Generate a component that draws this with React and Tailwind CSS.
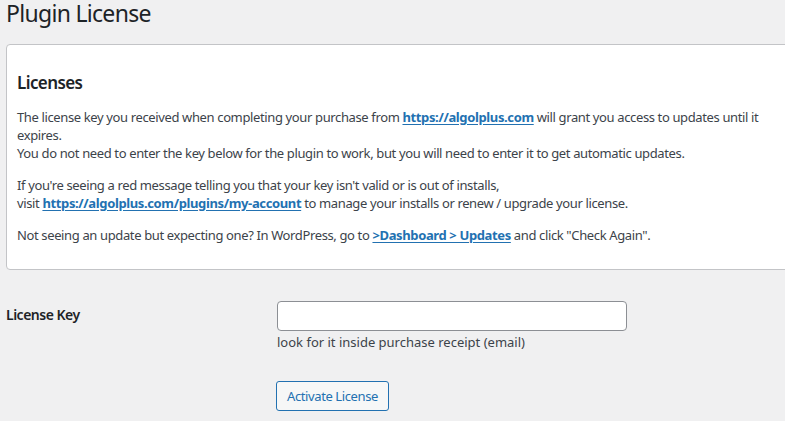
import React from "react";

const font = { fontFamily: '"Noto Sans", "Open Sans", sans-serif' };

function A({ children }) {
  return (
    <a href="#" className="font-bold text-[#2271b1] underline underline-offset-2">
      {children}
    </a>
  );
}

export default function App() {
  return (
    <div className="w-[785px] h-[421px] overflow-hidden bg-[#f0f0f1] text-[#3c434a]" style={font}>
      <div className="pl-[6px] pt-[1px]">
        <h1 className="text-[23px] leading-[25px] tracking-[-0.7px] text-[#1d2327] font-normal whitespace-nowrap">Plugin License</h1>
        <div className="mt-[18px] w-[820px] h-[226px] bg-white border border-[#c3c4c7] rounded-[4px] px-[10px] pt-[26px]">
          <h2 className="text-[17px] leading-[24px] tracking-[-0.6px] font-semibold text-[#1d2327]">Licenses</h2>
          <div className="mt-[13px] text-[13px] leading-[18px] tracking-[-0.37px] whitespace-nowrap">
            <p>
              The license key you received when completing your purchase from <A>https://algolplus.com</A> will grant you access to updates until it
              <br />
              expires.
              <br />
              You do not need to enter the key below for the plugin to work, but you will need to enter it to get automatic updates.
            </p>
            <p className="mt-[14px]">
              If you're seeing a red message telling you that your key isn't valid or is out of installs,
              <br />
              visit <A>https://algolplus.com/plugins/my-account</A> to manage your installs or renew / upgrade your license.
            </p>
            <p className="mt-[14px]">
              Not seeing an update but expecting one? In WordPress, go to <A>&gt;Dashboard &gt; Updates</A> and click "Check Again".
            </p>
          </div>
        </div>
        <div className="mt-[31px] flex">
          <div className="w-[270px] pt-[4px] text-[14px] leading-[20px] tracking-[-0.5px] font-semibold text-[#1d2327]">License Key</div>
          <div className="pl-[1px]">
            <input type="text" className="block w-[350px] h-[30px] bg-white border border-[#8c8f94] rounded-[4px] px-2 text-[14px]" />
            <p className="mt-[2px] text-[13px] leading-[18px] whitespace-nowrap">look for it inside purchase receipt (email)</p>
            <button className="block mt-[30px] -ml-[1px] h-[30px] w-[113px] border border-[#2271b1] rounded-[3px] bg-[#f6f7f7] text-[#2271b1] text-[13px] tracking-[-0.4px] leading-[28px]">
              Activate License
            </button>
          </div>
        </div>
      </div>
    </div>
  );
}
